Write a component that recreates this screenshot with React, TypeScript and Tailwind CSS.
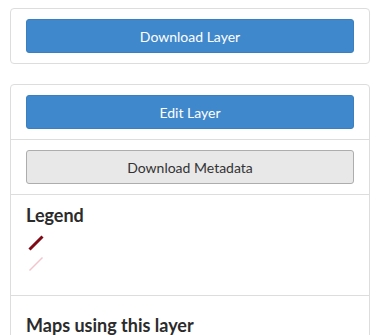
export default function App() {
  return (
    <div className="min-h-screen bg-white pl-[10px] pt-[8px] text-[#333] [font-family:Lato,'Liberation_Sans',sans-serif]">
      <div className="w-[360px]">
        {/* Download panel */}
        <div className="rounded border border-[#ddd] px-[15px] py-[10px]">
          <button className="h-[34px] w-full rounded-[3px] border border-[#3a80c0] bg-[#3f88cc] text-[14px] text-white">
            Download Layer
          </button>
        </div>

        {/* Layer panel */}
        <div className="mt-[20px] rounded-t border border-[#ddd]">
          <div className="px-[15px] py-[10px]">
            <button className="h-[34px] w-full rounded-[3px] border border-[#3a80c0] bg-[#3f88cc] text-[14px] text-white">
              Edit Layer
            </button>
          </div>
          <div className="border-t border-[#ddd] px-[15px] py-[10px]">
            <button className="h-[34px] w-full rounded-[3px] border border-[#adadad] bg-[#e8e8e8] text-[14px] text-[#333]">
              Download Metadata
            </button>
          </div>
          <div className="h-[101px] border-t border-[#ddd] px-[15px] pt-[10px]">
            <h3 className="text-[18px] font-bold leading-[20px] text-[#2b2b2b]">Legend</h3>
            <div className="mt-[10px] flex flex-col gap-[4px]">
              <svg width="20" height="17" viewBox="0 0 20 17">
                <line x1="3.5" y1="14.5" x2="16.5" y2="1.5" stroke="#7f0a14" strokeWidth="3" />
              </svg>
              <svg width="20" height="17" viewBox="0 0 20 17">
                <line x1="3.5" y1="14.5" x2="16.5" y2="1.5" stroke="#f2c4cc" strokeWidth="1.5" />
              </svg>
            </div>
          </div>
          <div className="border-t border-[#ddd] px-[15px] pt-[19px]">
            <h3 className="text-[18px] font-bold leading-[20px] text-[#2b2b2b]">Maps using this layer</h3>
          </div>
        </div>
      </div>
    </div>
  );
}
